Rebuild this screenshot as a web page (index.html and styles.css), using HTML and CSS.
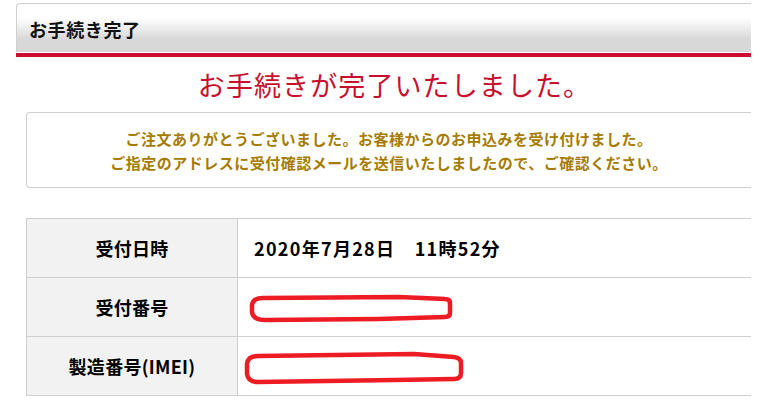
FILE: index.html
```html
<!DOCTYPE html>
<html lang="ja">
<head>
<meta charset="utf-8">
<title>お手続き完了</title>
<link rel="stylesheet" href="styles.css">
</head>
<body>
<div class="page">
  <div class="title-bar"><h1 class="title">お手続き完了</h1></div>
  <div class="title-rule"></div>
  <h2 class="done">お手続きが完了いたしました。</h2>
  <div class="message">
    <p>ご注文ありがとうございました。お客様からのお申込みを受け付けました。</p>
    <p>ご指定のアドレスに受付確認メールを送信いたしましたので、ご確認ください。</p>
  </div>
  <table class="info">
    <tr>
      <th>受付日時</th>
      <td>2020年7月28日　11時52分</td>
    </tr>
    <tr>
      <th>受付番号</th>
      <td class="masked">
        <svg class="scribble s1" width="214" height="30" viewBox="0 0 214 30">
          <path d="M14 4 L150 3 L196 5 Q201 5 201 9 L201 19 Q201 23 196 23 L130 25 L16 26 Q4 26 3 18 L3 11 Q4 4 14 4 Z" fill="none" stroke="#ed1c24" stroke-width="4.5" stroke-linejoin="round"/>
        </svg>
      </td>
    </tr>
    <tr>
      <th>製造番号(IMEI)</th>
      <td class="masked">
        <svg class="scribble s2" width="224" height="36" viewBox="0 0 224 36">
          <path d="M14 6 L170 4 L210 7 Q217 8 217 13 L217 23 Q217 29 210 29 L150 30 L14 32 Q4 32 3 24 L3 14 Q4 6 14 6 Z" fill="none" stroke="#ed1c24" stroke-width="4.5" stroke-linejoin="round"/>
        </svg>
      </td>
    </tr>
  </table>
</div>
</body>
</html>
```

FILE: styles.css
```css
html, body {
  margin: 0;
  padding: 0;
  background: #fff;
}

body {
  font-family: "Noto Sans CJK JP", "Noto Sans", sans-serif;
  color: #000;
}

.page {
  margin: 3px 0 0 16px;
  width: 735px;
}

.title-bar {
  height: 49px;
  box-sizing: border-box;
  border: 1px solid #cfcfcf;
  border-bottom: none;
  border-right: none;
  border-radius: 4px 0 0 0;
  background: linear-gradient(to bottom, #ffffff 0%, #ffffff 28%, #e9e9e9 55%, #d8d8d8 72%, #d8d8d8 100%);
  display: flex;
  align-items: center;
  padding: 2px 0 0 12px;
}

.title {
  margin: 0;
  font-size: 18px;
  font-weight: bold;
  line-height: 1;
  letter-spacing: 0.6px;
  color: #111;
}

.title-rule {
  border-top: 1px solid #fff;
  height: 4px;
  background: #cc0e33;
}

.done {
  margin: 0;
  padding: 10px 0 0 22px;
  height: 45px;
  text-align: center;
  font-size: 27px;
  font-weight: normal;
  line-height: 36px;
  color: #c8102e;
  letter-spacing: 1.1px;
}

.message {
  margin-left: 10px;
  border: 1px solid #cfcfcf;
  border-right: none;
  border-radius: 4px 0 0 4px;
  padding: 14px 0 12px 0;
  text-align: center;
  color: #a67c00;
  font-size: 15px;
  font-weight: bold;
  line-height: 24px;
  letter-spacing: 0.5px;
}

.message p {
  margin: 0;
}

.info {
  margin: 30px 0 0 10px;
  width: 725px;
  border-collapse: collapse;
}

.info th,
.info td {
  height: 58px;
  border: 1px solid #cfcfcf;
  font-size: 18px;
  font-weight: bold;
  padding: 0;
}

.info td {
  border-right: none;
  padding-left: 16px;
  text-align: left;
  letter-spacing: 1.3px;
}

.info th {
  width: 210px;
  background: #f2f2f2;
  text-align: center;
  letter-spacing: 0.3px;
}

.masked {
  position: relative;
}

.scribble {
  position: absolute;
  display: block;
}

.s1 {
  left: 11px;
  top: 16px;
}

.s2 {
  left: 6px;
  top: 13px;
}
```
